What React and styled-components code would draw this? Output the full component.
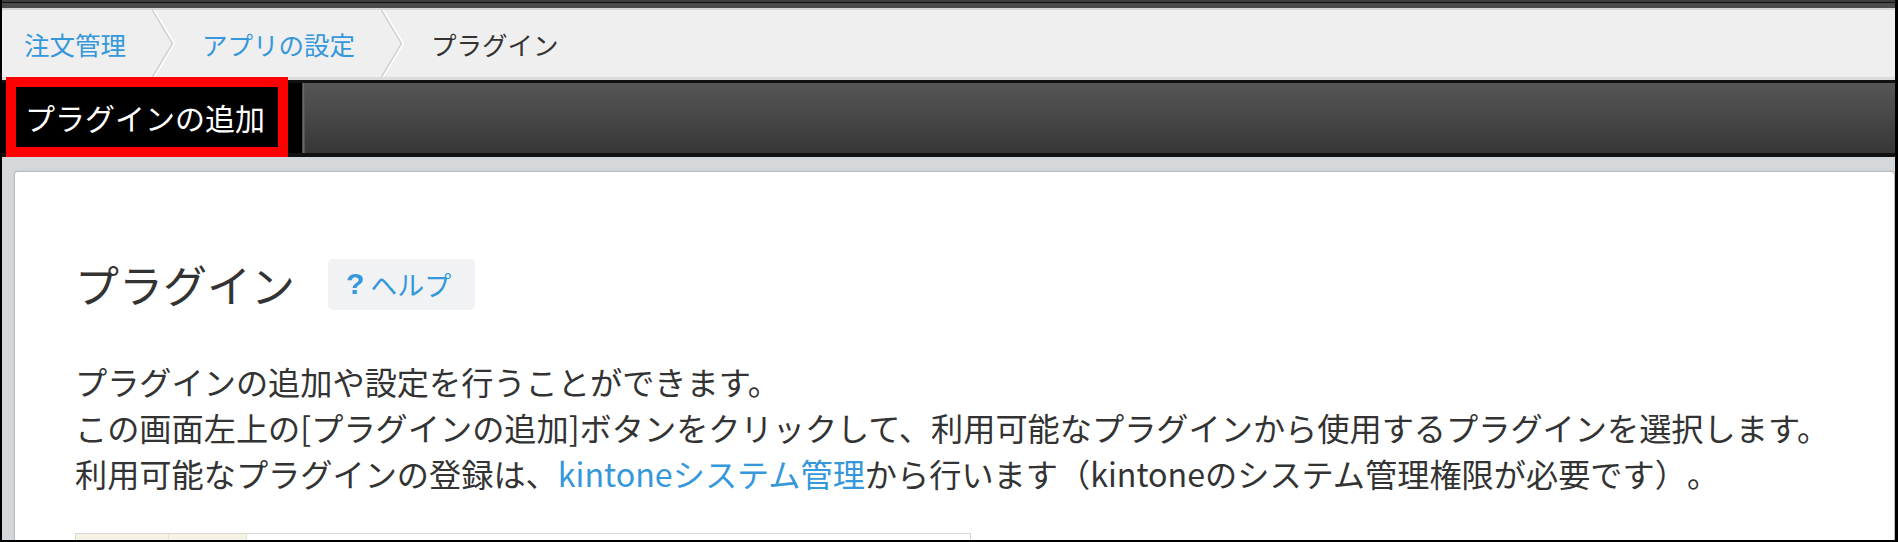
import React from 'react';
import styled, {createGlobalStyle} from 'styled-components';

const GlobalStyle = createGlobalStyle`
   html, body {
      margin: 0;
      padding: 0;
      background: #000;
   }
   body {
      font-family: "Noto Sans CJK JP", "Noto Sans", sans-serif;
      color: #333;
   }
`;

const Frame = styled.div`
   box-sizing: border-box;
   width: 1898px;
   height: 542px;
   display: flex;
   flex-direction: column;
   overflow: hidden;
   border-left: 2px solid #000;
   border-right: 3px solid #000;
   border-bottom: 2px solid #000;
   background: #d5d8db;
`;

const TopStrip = styled.div`
   flex: none;
   height: 10px;
   background: linear-gradient(
      to bottom,
      #3e3e3e 0, #3e3e3e 2px,
      #111 2px, #111 3px,
      #4b4b4b 3px, #4b4b4b 8px,
      #d6d6d6 8px, #d6d6d6 10px
   );
`;

const Breadcrumbs = styled.nav`
   flex: none;
   box-sizing: border-box;
   height: 70px;
   display: flex;
   align-items: stretch;
   background: #efefef;
   border-bottom: 3px solid #dcdcdc;
`;

const Crumb = styled.a`
   display: flex;
   align-items: center;
   padding: 0 25px 0 ${p => p.$first ? 22 : 24}px;
   font-size: 25.5px;
   line-height: 1;
   white-space: nowrap;
   text-decoration: none;
   color: ${p => p.$current ? '#333' : '#3498db'};
`;

const Chevron = styled.svg`
   flex: none;
   width: 27px;
   height: 67px;
`;

const Toolbar = styled.div`
   flex: none;
   box-sizing: border-box;
   height: 77px;
   display: flex;
   background: #111;
   border-top: 3px solid #111;
   border-bottom: 4px solid #111;
`;

const AddCell = styled.div`
   flex: none;
   width: 300px;
   display: flex;
   align-items: flex-start;
   padding-left: 4px;
   box-sizing: border-box;
   background: #000;
`;

const AddButton = styled.button`
   box-sizing: border-box;
   width: 282px;
   height: 80px;
   margin-top: -6px;
   padding: 0 0 0 9px;
   display: flex;
   align-items: center;
   border: 10px solid #ff0000;
   background: #000;
   color: #fff;
   font-family: inherit;
   font-size: 30px;
   line-height: 1;
   white-space: nowrap;
   cursor: pointer;
`;

const Divider = styled.div`
   flex: none;
   width: 3px;
   background: linear-gradient(to right, #3a3a3a, #6a6a6a, #4a4a4a);
`;

const Bar = styled.div`
   flex: 1;
   background: linear-gradient(to bottom, #555 0%, #4a4a4a 40%, #363636 100%);
`;

const Content = styled.main`
   flex: 1;
   min-height: 0;
   padding: 14px 0 0 12px;
`;

const Card = styled.section`
   box-sizing: border-box;
   height: 100%;
   background: #fff;
   border: 1px solid #b9bdc1;
   border-bottom: none;
   border-radius: 4px 4px 0 0;
   box-shadow: 0 0 2px rgba(0, 0, 0, 0.12);
   padding: 86px 60px 0 60px;
`;

const TitleRow = styled.div`
   display: flex;
   align-items: center;
   gap: 33px;
   height: 52px;
`;

const Title = styled.h1`
   margin: 0;
   font-size: 44px;
   font-weight: 400;
   line-height: 1;
   color: #333;
   white-space: nowrap;
`;

const HelpChip = styled.a`
   box-sizing: border-box;
   height: 51px;
   display: flex;
   align-items: center;
   gap: 6px;
   padding: 0 24px 0 18px;
   border-radius: 5px;
   background: #f0f2f4;
   color: #3498db;
   text-decoration: none;
   white-space: nowrap;
`;

const HelpMark = styled.span`
   font-family: "Liberation Sans", Arial, sans-serif;
   font-size: 30px;
   font-weight: 700;
   line-height: 1;
`;

const HelpLabel = styled.span`
   font-size: 27px;
   line-height: 1;
`;

const Description = styled.div`
   margin-top: 48px;
   font-size: 32.2px;
   line-height: 46px;
   color: #333;
   white-space: nowrap;
   text-spacing-trim: space-all;
`;

const Line = styled.p`
   margin: 0;
`;

const Link = styled.a`
   color: #3498db;
   text-decoration: none;
`;

const TableTop = styled.div`
   margin-top: 37px;
   width: 894px;
   height: 20px;
   display: flex;
   border-top: 1px solid #d6d6d6;
   border-left: 1px solid #d6d6d6;
   border-right: 1px solid #d6d6d6;
`;

const TableCell = styled.div`
   flex: ${p => p.$grow ? 1 : 'none'};
   width: ${p => p.$width ? `${p.$width}px` : 'auto'};
   background: ${p => p.$tint ? '#f7f3e4' : '#fff'};
   border-right: ${p => p.$grow ? 'none' : '1px solid #e2e2e2'};
`;

const crumbs = [
   {label: '注文管理'},
   {label: 'アプリの設定'},
   {label: 'プラグイン', current: true}
];

function ChevronMark() {
   return (
      <Chevron viewBox="0 0 27 67">
         <polyline points="3,0 23,33.5 3,67" fill="none" stroke="#ffffff" strokeWidth="2" />
         <polyline points="1.5,0 21.5,33.5 1.5,67" fill="none" stroke="#d2d2d2" strokeWidth="1.5" />
      </Chevron>
   );
}

export default function App() {
   return (
      <>
         <GlobalStyle />
         <Frame>
            <TopStrip />
            <Breadcrumbs>
               {crumbs.map((crumb, i) => (
                  <React.Fragment key={crumb.label}>
                     {i > 0 && <ChevronMark />}
                     <Crumb $first={i === 0} $current={crumb.current}>{crumb.label}</Crumb>
                  </React.Fragment>
               ))}
            </Breadcrumbs>
            <Toolbar>
               <AddCell>
                  <AddButton>プラグインの追加</AddButton>
               </AddCell>
               <Divider />
               <Bar />
            </Toolbar>
            <Content>
               <Card>
                  <TitleRow>
                     <Title>プラグイン</Title>
                     <HelpChip>
                        <HelpMark>?</HelpMark>
                        <HelpLabel>ヘルプ</HelpLabel>
                     </HelpChip>
                  </TitleRow>
                  <Description>
                     <Line>プラグインの追加や設定を行うことができます。</Line>
                     <Line>この画面左上の[プラグインの追加]ボタンをクリックして、利用可能なプラグインから使用するプラグインを選択します。</Line>
                     <Line>
                        利用可能なプラグインの登録は、<Link>kintoneシステム管理</Link>から行います（kintoneのシステム管理権限が必要です）。
                     </Line>
                  </Description>
                  <TableTop>
                     <TableCell $width={92} $tint />
                     <TableCell $width={77} $tint />
                     <TableCell $grow />
                  </TableTop>
               </Card>
            </Content>
         </Frame>
      </>
   );
}
